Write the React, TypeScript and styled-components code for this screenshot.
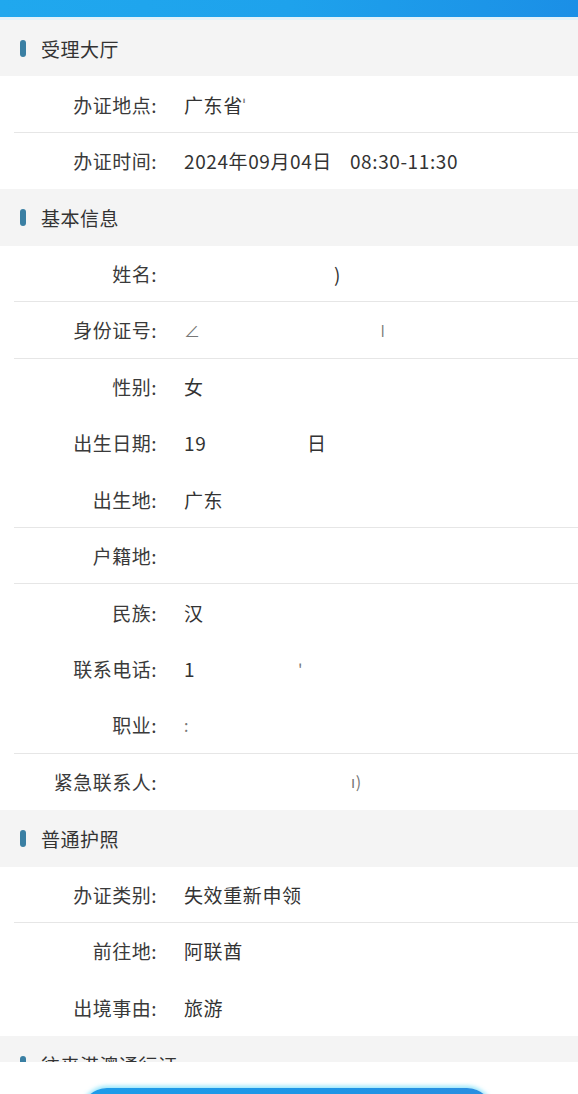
import { createGlobalStyle } from "styled-components"
import styled from "styled-components"

interface Part {
  t?: string
  w?: number
  gap?: number
  faint?: boolean
}

interface Field {
  label: string
  parts: Part[]
  line?: boolean
}

interface Section {
  title: string
  fields: Field[]
}

const SECTIONS: Section[] = [
  {
    title: "受理大厅",
    fields: [
      { label: "办证地点:", parts: [{ t: "广东省" }, { t: "ˈ", faint: true }], line: true },
      { label: "办证时间:", parts: [{ t: "2024年09月04日" }, { t: "08:30-11:30", gap: 18 }] },
    ],
  },
  {
    title: "基本信息",
    fields: [
      { label: "姓名:", parts: [{ w: 150 }, { t: ")" }], line: true },
      { label: "身份证号:", parts: [{ t: "∠", w: 196, faint: true }, { t: "ǀ", faint: true }], line: true },
      { label: "性别:", parts: [{ t: "女" }] },
      { label: "出生日期:", parts: [{ t: "19", w: 123 }, { t: "日" }] },
      { label: "出生地:", parts: [{ t: "广东" }], line: true },
      { label: "户籍地:", parts: [], line: true },
      { label: "民族:", parts: [{ t: "汉" }] },
      { label: "联系电话:", parts: [{ t: "1", w: 114 }, { t: "'", faint: true }] },
      { label: "职业:", parts: [{ t: ":", faint: true }], line: true },
      { label: "紧急联系人:", parts: [{ w: 167 }, { t: "ı)", faint: true }] },
    ],
  },
  {
    title: "普通护照",
    fields: [
      { label: "办证类别:", parts: [{ t: "失效重新申领" }], line: true },
      { label: "前往地:", parts: [{ t: "阿联酋" }] },
      { label: "出境事由:", parts: [{ t: "旅游" }] },
    ],
  },
  {
    title: "往来港澳通行证",
    fields: [],
  },
]

const GlobalStyle = createGlobalStyle`
  html, body {
    margin: 0;
    padding: 0;
    background: #ffffff;
  }
  body {
    font-family: "Noto Sans CJK SC", "Noto Sans", sans-serif;
    color: #333333;
  }
`

export default function App() {
  return (
    <>
      <GlobalStyle />
      <Page>
        <TopBar />
        <Content>
          {SECTIONS.map((section) => (
            <div key={section.title}>
              <SectionHeader>
                <Marker />
                <SectionTitle>{section.title}</SectionTitle>
              </SectionHeader>
              {section.fields.map((field) => (
                <Row key={field.label} $line={!!field.line}>
                  <Label>{field.label}</Label>
                  <Value>
                    {field.parts.map((part, i) => (
                      <Frag
                        key={i}
                        $faint={!!part.faint}
                        style={{ minWidth: part.w, marginLeft: part.gap }}
                      >
                        {part.t}
                      </Frag>
                    ))}
                  </Value>
                </Row>
              ))}
            </div>
          ))}
        </Content>
        <Footer>
          <SubmitButton />
        </Footer>
      </Page>
    </>
  )
}

const Page = styled.div`
  height: 100vh;
  display: flex;
  flex-direction: column;
  overflow: hidden;
`

const TopBar = styled.div`
  height: 17px;
  flex-shrink: 0;
  background: linear-gradient(90deg, #20a8ee 0%, #1ea2ec 50%, #1b8fe6 100%);
  border-bottom: 3px solid #e2f2fa;
`

const Content = styled.div`
  flex: 1;
  min-height: 0;
  overflow: hidden;
`

const SectionHeader = styled.div`
  height: 56.45px;
  box-sizing: border-box;
  background: #f4f4f4;
  display: flex;
  align-items: center;
  padding-left: 20px;
`

const Marker = styled.span`
  width: 6px;
  height: 17px;
  border-radius: 3px;
  background: #3a7fa3;
  margin-right: 15px;
`

const SectionTitle = styled.span`
  font-size: 19px;
  color: #333333;
  letter-spacing: 0.5px;
`

const Row = styled.div<{ $line: boolean }>`
  height: 56.45px;
  box-sizing: border-box;
  margin-left: 14px;
  display: flex;
  align-items: center;
  border-bottom: 1px solid ${(p) => (p.$line ? "#e6e6e6" : "transparent")};
  background: #ffffff;
`

const Label = styled.span`
  width: 143px;
  text-align: right;
  font-size: 19px;
  color: #3a3a3a;
  letter-spacing: 0.5px;
  flex-shrink: 0;
`

const Value = styled.span`
  margin-left: 27px;
  display: flex;
  align-items: center;
  font-size: 19px;
  color: #333333;
  letter-spacing: 0.6px;
  white-space: pre;
`

const Frag = styled.span<{ $faint: boolean }>`
  display: inline-block;
  color: ${(p) => (p.$faint ? "#777777" : "#333333")};
  font-size: ${(p) => (p.$faint ? "16px" : "19px")};
`

const Footer = styled.div`
  height: 32px;
  flex-shrink: 0;
  background: #ffffff;
  display: flex;
  justify-content: center;
  padding-top: 26px;
  box-sizing: border-box;
  overflow: hidden;
`

const SubmitButton = styled.div`
  width: 412px;
  height: 56px;
  flex-shrink: 0;
  border-radius: 26px;
  background: linear-gradient(90deg, #1d9ce9 0%, #1e95e6 60%, #2a8ee0 100%);
  box-shadow: 0 -2px 4px rgba(110, 220, 250, 0.75);
  margin-right: 4px;
`
